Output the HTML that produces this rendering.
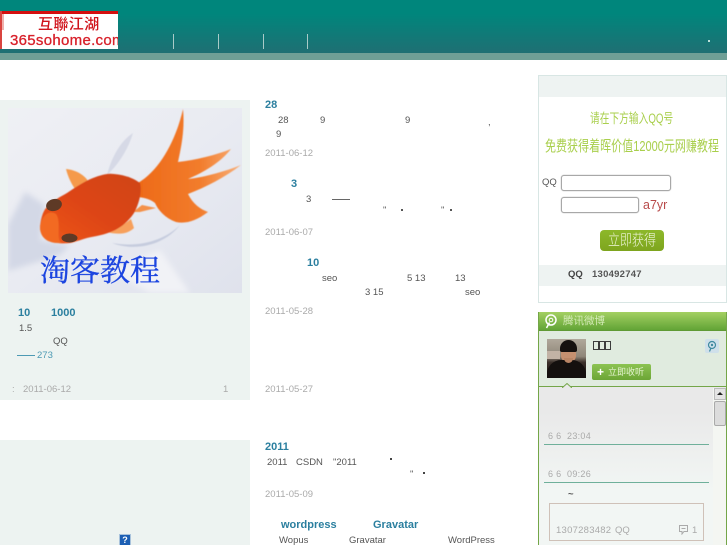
<!DOCTYPE html>
<html><head><meta charset="utf-8">
<style>
html,body{margin:0;padding:0;background:#fff;width:727px;height:545px;overflow:hidden}
body{position:relative;font-family:"Liberation Sans","Noto Sans CJK SC",sans-serif;filter:blur(.35px)}
div,span,svg{position:absolute;display:block}
span{white-space:nowrap;line-height:12px;font-size:9.5px;color:#555}
.t{font-size:11px;font-weight:bold;color:#2b7f9f}
.d{color:#aaa;letter-spacing:.02px}
.g{color:#a9cf4c;line-height:18px;transform-origin:0 50%}
.b{border:1px solid #a8a8a8;border-radius:3px;background:#fff;box-shadow:0 0 1px #999;box-sizing:border-box}
.q{width:4px;height:7px;border:1px solid #3c3c3c;top:341px}
</style></head>
<body>
<!-- header -->
<div style="left:0;top:0;width:727px;height:53px;background:linear-gradient(#00867c 0,#00867c 25%,#1f6f73 100%)"></div>
<div style="left:0;top:53px;width:727px;height:7px;background:#6f9f96"></div>
<div style="left:0;top:11px;width:118px;height:38px;background:#fff;overflow:hidden">
  <div style="left:0;top:0;width:118px;height:3px;background:#d40f0f"></div>
  <div style="left:0;top:0;width:2px;height:38px;background:#d9443f"></div>
  <div style="left:2px;top:3px;width:2px;height:16px;background:#f0b0ac"></div>
  <span style="left:38px;top:4px;font-size:15px;line-height:18px;font-weight:500;color:#d0141c;letter-spacing:.4px;font-family:'Noto Sans CJK TC',sans-serif">互聯江湖</span>
  <span style="left:10px;top:22px;font-size:15px;line-height:16px;color:#d8202a;letter-spacing:.3px;-webkit-text-stroke:.3px #d8202a;font-family:'Liberation Sans',sans-serif">365sohome.com</span>
</div>
<div style="left:173px;top:34px;width:1px;height:15px;background:#a9cbc8"></div>
<div style="left:218px;top:34px;width:1px;height:15px;background:#a9cbc8"></div>
<div style="left:263px;top:34px;width:1px;height:15px;background:#a9cbc8"></div>
<div style="left:307px;top:34px;width:1px;height:15px;background:#a9cbc8"></div>
<div style="left:708px;top:40px;width:2px;height:2px;background:#bfe0da"></div>

<!-- left card -->
<div style="left:0;top:100px;width:250px;height:300px;background:#edf3f1"></div>
<div style="left:0;top:440px;width:250px;height:105px;background:#edf3f1"></div>

<svg style="left:0;top:0" width="250" height="300" viewBox="0 0 250 300">
<defs>
<linearGradient id="bg" x1="0" y1="0" x2="1" y2="1"><stop offset="0" stop-color="#eff0f4"/><stop offset=".5" stop-color="#e9ebf2"/><stop offset="1" stop-color="#dfe2ec"/></linearGradient>
<linearGradient id="body" x1="0" y1="1" x2="1" y2="0"><stop offset="0" stop-color="#ee5a1c"/><stop offset=".5" stop-color="#dd4416"/><stop offset="1" stop-color="#cf4418"/></linearGradient>
<linearGradient id="tail" x1="0" y1="0" x2="1" y2="0"><stop offset="0" stop-color="#ee6a18"/><stop offset=".6" stop-color="#f27c2c"/><stop offset="1" stop-color="#f8b07a"/></linearGradient>
<filter id="bl"><feGaussianBlur stdDeviation="3"/></filter>
<filter id="bs"><feGaussianBlur stdDeviation=".6"/></filter>
<clipPath id="im"><rect x="8" y="108" width="234" height="185"/></clipPath>
</defs>
<g clip-path="url(#im)">
<rect x="8" y="108" width="234" height="185" fill="url(#bg)"/>
<path d="M8 225 L25 192 L45 205 L40 240 L70 245 L60 255 L8 271Z" fill="#d3d8e6" filter="url(#bl)"/>
<path d="M133 133 C128 150 118 165 107 175 C112 155 122 140 133 133Z" fill="#d6d9e6" filter="url(#bs)"/>
<path d="M112 243 C140 248 165 240 180 225 C165 245 135 252 112 243Z" fill="#c6ccde" filter="url(#bs)"/>
<path d="M150 293 L110 270 L160 250 L190 293Z" fill="#f1f2f6" filter="url(#bl)"/>
<g filter="url(#bs)">
<path d="M66 169 C77 170 85 176 88 181 L75 189 C71 183 68 177 66 169Z" fill="#f59a4c"/>
<path d="M107 232 C118 229 124 224 131 219 L134 228 C128 234 118 235 107 232Z" fill="#f7a05c"/>
<path d="M133 212 L142 205 L156 208 L140 212Z" fill="#f4914a"/>
<path d="M138 183 C160 170 176 140 183 109 C185 130 181 148 178 162 C196 160 216 155 231 149 C220 163 204 172 188 179 C206 177 226 171 241 165 C224 178 206 187 188 194 C193 204 200 209 208 212 C196 221 186 224 176 222 C165 218 158 210 155 203 C150 199 145 198 138 197Z" fill="url(#tail)"/>
<path d="M40 227 C41 216 44 209 48 206 C54 200 60 197 67 193 C76 187 85 181 93 178 C101 175 107 173 114 174 C122 175 130 176 140 183 C142 190 140 202 134 213 C128 222 120 228 113 231 C104 235 96 236 87 238 C80 240 75 242 70 243 C62 244 55 243 50 241 C44 238 40 234 40 227Z" fill="url(#body)"/>
<path d="M40 227 C42 214 50 210 56 214 C62 222 55 240 62 243 C48 244 40 238 40 227Z" fill="#f26a22"/>
</g>
<ellipse cx="54" cy="205" rx="8" ry="6" fill="#5e3a26" transform="rotate(-15 54 205)"/>
<ellipse cx="69.500" cy="238" rx="8" ry="4.500" fill="#5e3a26"/>
<text x="40" y="281" font-family="'Noto Serif CJK SC',serif" font-size="30" fill="#1c45e0" stroke="#1c45e0" stroke-width=".35">淘客教程</text>
</g>
</svg>

<span class="t" style="left:18px;top:307px">10</span>
<span class="t" style="left:51px;top:307px">1000</span>
<span style="left:19px;top:323px;color:#555">1.5</span>
<span style="left:53px;top:336px">QQ</span>
<div style="left:17px;top:355px;width:18px;height:1px;background:#4d9ab4"></div>
<span style="left:37px;top:350px;color:#4d9ab4">273</span>
<span class="d" style="left:12px;top:384px">:</span>
<span class="d" style="left:23px;top:384px">2011-06-12</span>
<span class="d" style="left:223px;top:384px">1</span>
<div style="left:119px;top:534px;width:12px;height:11px;background:#a9c3dc"></div>
<div style="left:120px;top:535px;width:10px;height:10px;background:#1c5fb4;color:#fff;font-size:9px;line-height:10px;text-align:center;font-weight:bold">?</div>

<!-- middle column -->
<span class="t" style="left:265px;top:99px">28</span>
<span style="left:278px;top:115px">28</span>
<span style="left:320px;top:115px">9</span>
<span style="left:405px;top:115px">9</span>
<span style="left:488px;top:117px">,</span>
<span style="left:276px;top:129px">9</span>
<span class="d" style="left:265px;top:148px">2011-06-12</span>

<span class="t" style="left:291px;top:178px">3</span>
<span style="left:306px;top:194px">3</span>
<div style="left:332px;top:199px;width:18px;height:1px;background:#666"></div>
<span style="left:383px;top:205px">"</span>
<div style="left:401px;top:209px;width:2px;height:2px;background:#555"></div>
<span style="left:441px;top:205px">"</span>
<div style="left:450px;top:209px;width:2px;height:2px;background:#555"></div>
<span class="d" style="left:265px;top:227px">2011-06-07</span>

<span class="t" style="left:307px;top:257px">10</span>
<span style="left:322px;top:273px">seo</span>
<span style="left:407px;top:273px">5 13</span>
<span style="left:455px;top:273px">13</span>
<span style="left:365px;top:287px">3 15</span>
<span style="left:465px;top:287px">seo</span>
<span class="d" style="left:265px;top:306px">2011-05-28</span>
<span class="d" style="left:265px;top:384px">2011-05-27</span>

<span class="t" style="left:265px;top:441px">2011</span>
<span style="left:267px;top:457px">2011</span>
<span style="left:296px;top:457px">CSDN</span>
<span style="left:333px;top:457px">"2011</span>
<div style="left:390px;top:458px;width:2px;height:2px;background:#444"></div>
<span style="left:410px;top:469px">"</span>
<div style="left:423px;top:472px;width:2px;height:2px;background:#444"></div>
<span class="d" style="left:265px;top:489px">2011-05-09</span>

<span class="t" style="left:281px;top:519px">wordpress</span>
<span class="t" style="left:373px;top:519px">Gravatar</span>
<span style="left:279px;top:535px">Wopus</span>
<span style="left:349px;top:535px">Gravatar</span>
<span style="left:448px;top:535px">WordPress</span>

<!-- QQ box -->
<div style="left:538px;top:75px;width:187px;height:226px;border:1px solid #d8e6e4;box-sizing:content-box;background:#fff"></div>
<div style="left:539px;top:76px;width:187px;height:21px;background:#eef3f2"></div>
<div style="left:539px;top:265px;width:187px;height:21px;background:#eef3f2"></div>
<span class="g" style="left:590px;top:110px;font-size:13.5px;transform:scaleX(.72)">请在下方输入QQ号</span>
<span class="g" style="left:545px;top:138px;font-size:15px;transform:scaleX(.735)">免费获得着晖价值12000元网赚教程</span>
<span style="left:542px;top:177px;color:#555">QQ</span>
<div class="b" style="left:561px;top:175px;width:110px;height:16px"></div>
<div class="b" style="left:561px;top:197px;width:78px;height:16px"></div>
<span style="left:643px;top:199px;font-size:12.5px;line-height:13px;color:#b84a4a">a7yr</span>
<div style="left:600px;top:230px;width:64px;height:21px;border-radius:4px;background:linear-gradient(#8db82a,#7ea51e)"></div>
<span style="left:608px;top:232px;font-size:15px;line-height:18px;color:#f0f6dc;font-weight:300;transform-origin:0 50%;transform:scaleX(.8)">立即获得</span>
<span style="left:568px;top:269px;font-weight:bold;color:#444">QQ</span>
<span style="left:592px;top:269px;font-weight:bold;color:#555;letter-spacing:.25px">130492747</span>

<!-- weibo -->
<div style="left:538px;top:312px;width:189px;height:233px;background:linear-gradient(#e9e9e9 0,#e9e9e9 100px,#f2f6f4 180px)"></div>
<div style="left:538px;top:312px;width:189px;height:18px;background:linear-gradient(#a4d062,#62a436)"></div>
<div style="left:538px;top:330px;width:189px;height:57px;background:#e0ebdf;border-top:1px solid #5f9a34;border-bottom:1px solid #74a648;box-sizing:border-box"></div>
<div style="left:538px;top:312px;width:1px;height:233px;background:#74a648"></div>
<div style="left:726px;top:312px;width:1px;height:233px;background:#74a648"></div>
<svg style="left:543px;top:313px" width="15" height="16" viewBox="0 0 15 16"><circle cx="8" cy="7" r="5" fill="none" stroke="#fff" stroke-width="1.500"/><circle cx="8" cy="7" r="1.800" fill="none" stroke="#fff"/><path d="M6.500 9.500 L3.500 15" stroke="#fff" stroke-width="1.500"/></svg>
<span style="left:563px;top:312px;font-size:10.500px;line-height:18px;color:#d5ebb8">腾讯微博</span>
<div style="left:547px;top:339px;width:39px;height:39px;background:linear-gradient(#b0a89b,#8f8679 45%,#3a2f29 60%,#16110e);overflow:hidden">
 <div style="left:0;top:12px;width:13px;height:8px;background:#c2b3a5"></div>
 <div style="left:14px;top:10px;width:15px;height:14px;background:#c59070;border-radius:4px 4px 8px 8px"></div>
 <div style="left:13px;top:1px;width:17px;height:12px;background:#16110f;border-radius:9px 9px 2px 2px"></div>
 <div style="left:0;top:21px;width:39px;height:18px;background:#14100e;border-radius:14px 14px 0 0"></div>
 <div style="left:17px;top:19px;width:9px;height:5px;background:#b98565;border-radius:0 0 5px 5px"></div>
</div>
<div class="q" style="left:593px"></div><div class="q" style="left:599px"></div><div class="q" style="left:605px"></div>
<div style="left:592px;top:364px;width:59px;height:16px;border-radius:2px;background:linear-gradient(#8cc352,#6ca536)"></div>
<span style="left:597px;top:366px;font-weight:bold;font-size:12px;color:#fff">+</span>
<span style="left:608px;top:366px;font-size:9px;color:#e5f3d0">立即收听</span>
<div style="left:705px;top:339px;width:14px;height:14px;background:#cfe0ea;border-radius:2px"></div>
<svg style="left:705px;top:339px" width="14" height="14" viewBox="0 0 14 14"><circle cx="7" cy="6" r="3.500" fill="none" stroke="#3f8aa0" stroke-width="1.200"/><circle cx="7" cy="6" r="1.200" fill="#3f8aa0"/><path d="M6 9 L4.500 12.500" stroke="#3f8aa0" stroke-width="1.200"/></svg>
<svg style="left:562px;top:383px" width="10" height="5" viewBox="0 0 10 5"><path d="M0 5 L5 .5 L10 5" fill="#e9e9e9" stroke="#74a648"/></svg>

<div style="left:713px;top:388px;width:13px;height:157px;background:#f4f6f2"></div>
<div style="left:714px;top:388px;width:12px;height:12px;background:#e4e4e4;border:1px solid #bbb;box-sizing:border-box"></div>
<div style="left:717px;top:392px;width:0;height:0;border:3px solid transparent;border-bottom:3px solid #222;border-top:0"></div>
<div style="left:714px;top:401px;width:12px;height:25px;background:#dcdcdc;border:1px solid #aaa;box-sizing:border-box;border-radius:2px"></div>

<span class="d" style="left:548px;top:430px;font-size:9px;letter-spacing:.3px">6 6 &nbsp;23:04</span>
<div style="left:544px;top:444px;width:165px;height:1px;background:#6fb09a"></div>
<span class="d" style="left:548px;top:468px;font-size:9px;letter-spacing:.3px">6 6 &nbsp;09:26</span>
<div style="left:544px;top:482px;width:165px;height:1px;background:#6fb09a"></div>
<span style="left:568px;top:489px;font-weight:bold;color:#555">~</span>
<div style="left:549px;top:503px;width:155px;height:38px;border:1px solid #cfc1b8;box-sizing:border-box"></div>
<span class="d" style="left:556px;top:525px;letter-spacing:.25px">1307283482</span>
<span class="d" style="left:615px;top:525px;">QQ</span>
<svg style="left:678px;top:524px" width="11" height="11" viewBox="0 0 11 11"><path d="M1.500 1.500 H9.500 V7.500 H6 L4 10 V7.500 H1.500Z M3.500 4.500 H7.500" fill="none" stroke="#aaa"/></svg>
<span class="d" style="left:692px;top:525px">1</span>
</body></html>
